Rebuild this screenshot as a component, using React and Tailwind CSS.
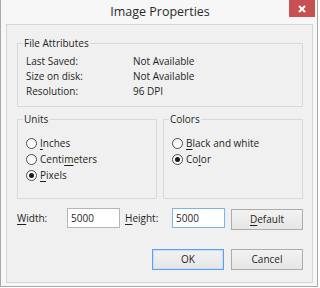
import React from 'react';

const font = { fontFamily: '"Open Sans", "Noto Sans", sans-serif' };

function U({ children }) {
  return <span className="underline underline-offset-[2px] decoration-[1px]">{children}</span>;
}

function Radio({ checked, children }) {
  return (
    <div className="flex h-[16px] items-center">
      <span className="flex h-[11px] w-[11px] shrink-0 items-center justify-center rounded-full border border-[#4d4d4d] bg-gradient-to-b from-[#f4f4f4] to-white">
        {checked && <span className="h-[5px] w-[5px] rounded-full bg-[#1a1a1a]" />}
      </span>
      <span className="ml-[3px]">{children}</span>
    </div>
  );
}

function Group({ title, className, children }) {
  return (
    <fieldset className={'border border-[#d9d9d9] pl-[8px] ' + (className || '')}>
      <legend className="ml-[-3px] px-[1px] leading-[14px]">{title}</legend>
      {children}
    </fieldset>
  );
}

function Button({ primary, children, className }) {
  return (
    <button
      type="button"
      className={
        'flex h-[21px] w-[72px] items-center justify-center border bg-gradient-to-b from-[#f2f2f2] to-[#e6e6e6] ' +
        (primary ? 'border-[#5d9ff0] shadow-[inset_0_0_0_1px_#c6defa]' : 'border-[#adadad]') +
        ' ' +
        (className || '')
      }
    >
      {children}
    </button>
  );
}

export default function App() {
  return (
    <div className="h-[288px] w-[320px] bg-white text-[10px] text-[#1e1e1e]" style={font}>
      <div className="flex h-[287px] w-[318px] flex-col border-x border-b border-[#a8a8a8] bg-[#f7f7f7]">
        <div className="relative flex h-[24px] shrink-0 items-center justify-center pl-[2px]">
          <span className="text-[12.5px] text-[#2b2b2b]">Image Properties</span>
          <div className="absolute right-[2px] top-0 flex h-[17px] w-[26px] items-center justify-center bg-[#c75050]">
            <svg width="8" height="8" viewBox="0 0 8 8">
              <path d="M1 1L7 7M7 1L1 7" stroke="white" strokeWidth="2" />
            </svg>
          </div>
        </div>

        <div className="ml-[5px] flex h-[259px] w-[307px] flex-col border border-[#d6d6d6] bg-[#f0f0f0] pl-[10px] pr-[9px] pt-[11px]">
          <Group title="File Attributes" className="pb-[7px]">
            <div className="grid grid-cols-[107px_1fr] pt-[4px] leading-[15px]">
              <span>Last Saved:</span>
              <span>Not Available</span>
              <span>Size on disk:</span>
              <span>Not Available</span>
              <span>Resolution:</span>
              <span>96 DPI</span>
            </div>
          </Group>

          <div className="mt-[5px] flex gap-[6px]">
            <Group title="Units" className="w-[140px] pb-[15px]">
              <div className="pt-[9px]">
                <Radio><U>I</U>nches</Radio>
                <Radio>Centi<U>m</U>eters</Radio>
                <Radio checked><U>P</U>ixels</Radio>
              </div>
            </Group>
            <Group title="Colors" className="w-[140px] pb-[15px]">
              <div className="pt-[9px]">
                <Radio><U>B</U>lack and white</Radio>
                <Radio checked>Co<U>l</U>or</Radio>
              </div>
            </Group>
          </div>

          <div className="mt-[9px] flex h-[21px] items-start">
            <span className="flex h-[20px] w-[50px] items-center"><U>W</U>idth:</span>
            <div className="flex h-[20px] w-[53px] items-center border border-[#b5b5b5] bg-white pl-[3px]">5000</div>
            <span className="ml-[5px] flex h-[20px] w-[47px] items-center"><U>H</U>eight:</span>
            <div className="flex h-[20px] w-[53px] items-center border border-[#7eb4ea] bg-white pl-[3px]">5000</div>
            <Button className="ml-[6px] mt-[1px] h-[20px]"><U>D</U>efault</Button>
          </div>

          <div className="mt-[20px] flex justify-end gap-[7px]">
            <Button primary>OK</Button>
            <Button>Cancel</Button>
          </div>
        </div>
      </div>
    </div>
  );
}
